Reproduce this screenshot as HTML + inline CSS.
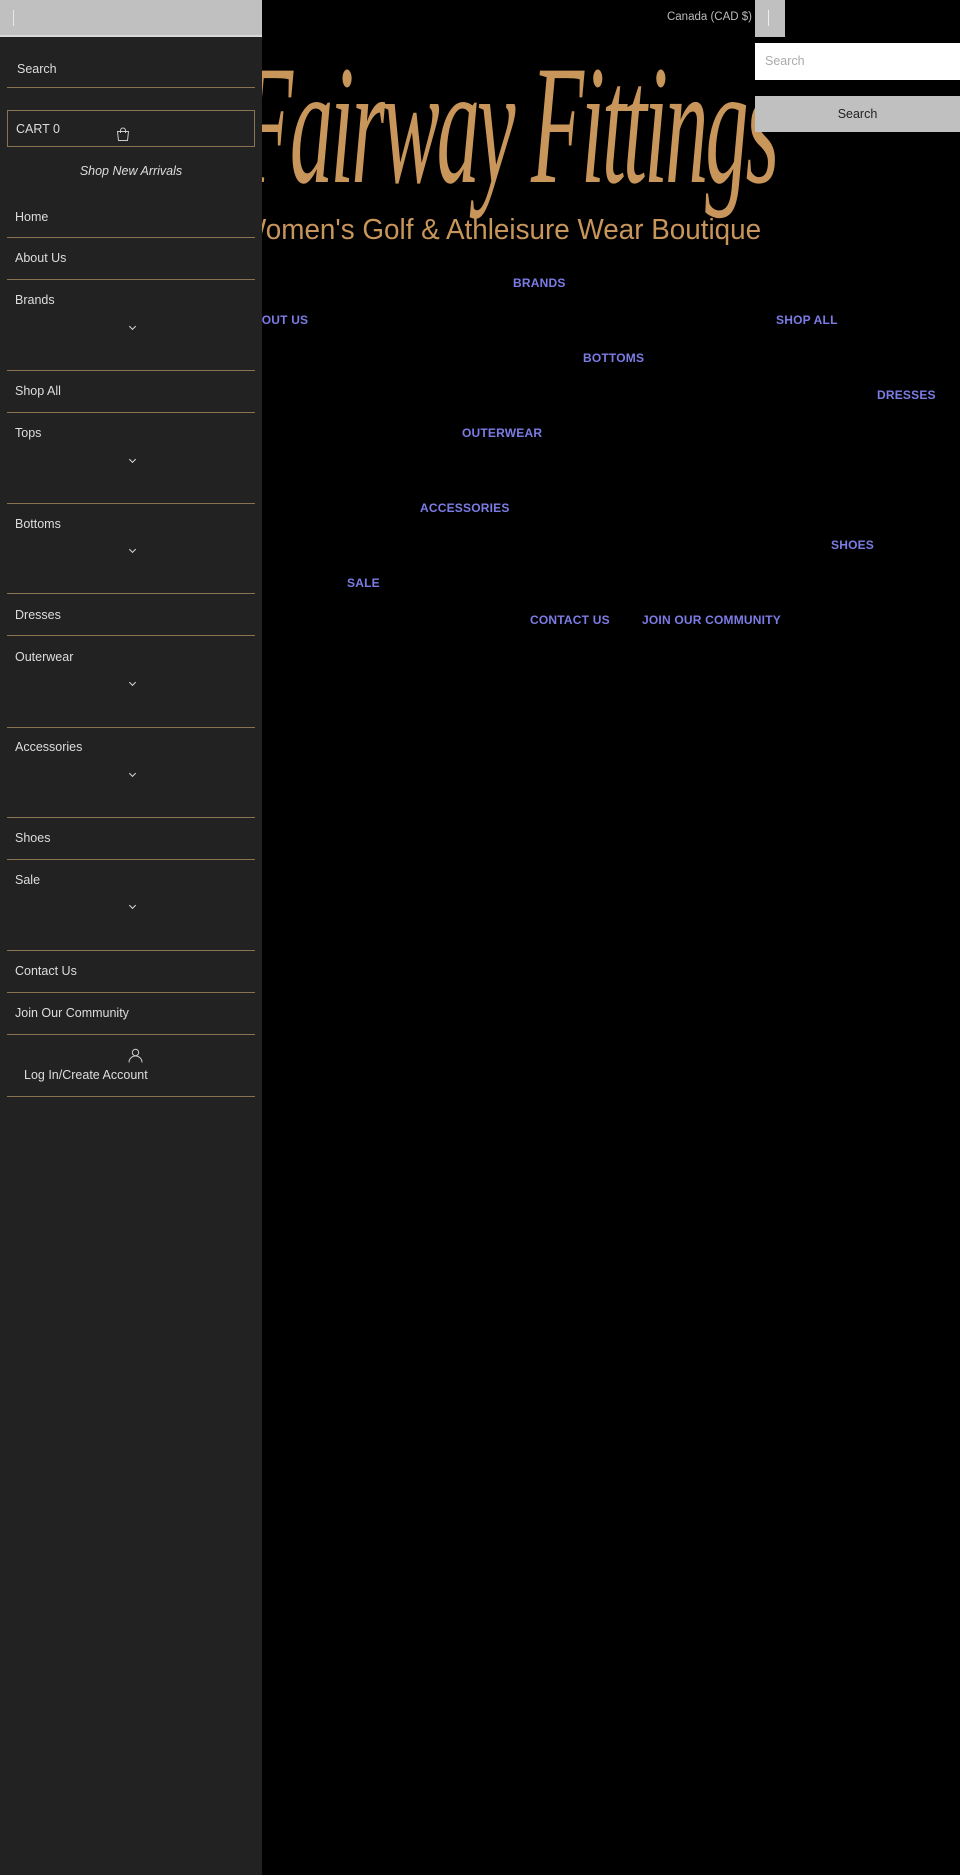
<!DOCTYPE html>
<html><head><meta charset="utf-8"><style>
*{margin:0;padding:0;box-sizing:border-box}
body{width:960px;height:1875px;background:#000;position:relative;overflow:hidden;font-family:"Liberation Sans",sans-serif}
.a{position:absolute;white-space:nowrap}
#side{position:absolute;left:0;top:0;width:262px;height:1875px;background:#222;z-index:5}
#topbar{position:absolute;left:0;top:0;width:262px;height:37px;background:#c0c0c0;border-bottom:2px solid #d8d8d8}
.ln{position:absolute;left:7px;width:248px;height:1px;background:#8a7350}
.it{position:absolute;left:15px;font-size:12.5px;color:#ddd;transform:translateY(-50%)}
.ch{position:absolute;left:130px;width:5px;height:5px;border-right:1.3px solid #ddd;border-bottom:1.3px solid #ddd;transform:rotate(45deg)}
.nv{position:absolute;color:#7c7ce6;font-size:12px;font-weight:bold;letter-spacing:.2px;transform:translateY(-50%);white-space:nowrap}
.r{z-index:3}
</style></head><body>
<div class="a" style="left:240px;top:40px;font-family:'Liberation Serif',serif;font-style:italic;font-size:170px;color:#c8955a;letter-spacing:-6px;line-height:1;transform:scaleX(.51);transform-origin:left">Fairway Fittings</div>
<div class="a" style="left:240px;top:216px;font-size:29px;color:#c8955a;line-height:1;transform:scaleX(.96);transform-origin:left">Women's Golf &amp; Athleisure Wear Boutique</div>

<div class="a r" style="right:208px;top:11px;font-size:11.5px;color:#bbb">Canada (CAD $)</div>
<div class="a r" style="left:755px;top:0;width:30px;height:37px;background:#c0c0c0"><div style="position:absolute;left:13px;top:10px;width:1px;height:16px;background:#eee"></div></div>
<div class="a r" style="left:755px;top:43px;width:205px;height:37px;background:#fff;color:#aaa;font-size:12.5px;padding:11px 10px">Search</div>
<div class="a r" style="left:755px;top:96px;width:205px;height:36px;background:#c0c0c0;color:#222;font-size:12.5px;text-align:center;line-height:36px">Search</div>

<div class="nv" style="left:513px;top:283px">BRANDS</div>
<div class="nv" style="left:244px;top:320px">ABOUT US</div>
<div class="nv" style="left:776px;top:320px">SHOP ALL</div>
<div class="nv" style="left:583px;top:358px">BOTTOMS</div>
<div class="nv" style="left:877px;top:395px">DRESSES</div>
<div class="nv" style="left:462px;top:433px">OUTERWEAR</div>
<div class="nv" style="left:420px;top:508px">ACCESSORIES</div>
<div class="nv" style="left:831px;top:545px">SHOES</div>
<div class="nv" style="left:347px;top:583px">SALE</div>
<div class="nv" style="left:530px;top:620px">CONTACT US</div>
<div class="nv" style="left:642px;top:620px">JOIN OUR COMMUNITY</div>

<div id="side">
<div id="topbar"><div style="position:absolute;left:13px;top:10px;width:1px;height:16px;background:#e8e8e8"></div></div>
<div class="it" style="top:69px;left:17px">Search</div>
<div class="ln" style="top:87px"></div>
<div style="position:absolute;left:7px;top:110px;width:248px;height:37px;border:1px solid #8a7350"></div>
<div class="it" style="top:129px;left:16px">CART 0</div>
<svg style="position:absolute;left:116px;top:127px" width="14" height="14" viewBox="0 0 14 14" fill="none" stroke="#ccc" stroke-width="1"><path d="M1.5 4.5h11l-1 9h-9z"/><path d="M4.5 6V3.5a2.5 2.5 0 0 1 5 0V6"/></svg>
<div class="it" style="top:171px;left:0;width:262px;text-align:center;font-style:italic;color:#ddd">Shop New Arrivals</div>
<div class="it" style="top:217px">Home</div><div class="ln" style="top:237px"></div>
<div class="it" style="top:258px">About Us</div><div class="ln" style="top:279px"></div>
<div class="it" style="top:300px">Brands</div><div class="ch" style="top:324px"></div><div class="ln" style="top:370px"></div>
<div class="it" style="top:391px">Shop All</div><div class="ln" style="top:412px"></div>
<div class="it" style="top:433px">Tops</div><div class="ch" style="top:457px"></div><div class="ln" style="top:503px"></div>
<div class="it" style="top:524px">Bottoms</div><div class="ch" style="top:547px"></div><div class="ln" style="top:593px"></div>
<div class="it" style="top:615px">Dresses</div><div class="ln" style="top:635px"></div>
<div class="it" style="top:657px">Outerwear</div><div class="ch" style="top:680px"></div><div class="ln" style="top:727px"></div>
<div class="it" style="top:747px">Accessories</div><div class="ch" style="top:771px"></div><div class="ln" style="top:817px"></div>
<div class="it" style="top:838px">Shoes</div><div class="ln" style="top:859px"></div>
<div class="it" style="top:880px">Sale</div><div class="ch" style="top:903px"></div><div class="ln" style="top:950px"></div>
<div class="it" style="top:971px">Contact Us</div><div class="ln" style="top:992px"></div>
<div class="it" style="top:1013px">Join Our Community</div><div class="ln" style="top:1034px"></div>
<svg style="position:absolute;left:128px;top:1048px" width="15" height="15" viewBox="0 0 15 15" fill="none" stroke="#ccc" stroke-width="1"><circle cx="7.5" cy="4.5" r="3.2"/><path d="M1 14.5a6.5 6.5 0 0 1 13 0"/></svg>
<div class="it" style="top:1075px;left:24px">Log In/Create Account</div>
<div class="ln" style="top:1096px"></div>
</div>
</body></html>
